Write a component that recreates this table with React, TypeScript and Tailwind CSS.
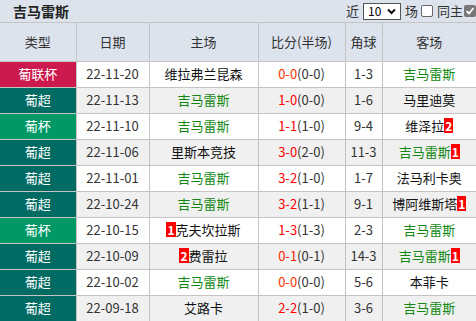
const rows = [
  { t: "葡联杯", tc: "bg-[#cc1a4e]", d: "22-11-20", h: "维拉弗兰昆森", hg: false, hb: "", s: "0-0", sc: "text-[#ff3300]", ht: "(0-0)", c: "1-3", a: "吉马雷斯", ag: true, ab: "" },
  { t: "葡超", tc: "bg-[#006b63]", d: "22-11-13", h: "吉马雷斯", hg: true, hb: "", s: "1-0", sc: "text-[#ff0000]", ht: "(0-0)", c: "1-6", a: "马里迪莫", ag: false, ab: "" },
  { t: "葡杯", tc: "bg-[#009966]", d: "22-11-10", h: "吉马雷斯", hg: true, hb: "", s: "1-1", sc: "text-[#ff0000]", ht: "(1-0)", c: "9-4", a: "维泽拉", ag: false, ab: "2" },
  { t: "葡超", tc: "bg-[#006b63]", d: "22-11-06", h: "里斯本竞技", hg: false, hb: "", s: "3-0", sc: "text-[#ff0000]", ht: "(2-0)", c: "11-3", a: "吉马雷斯", ag: true, ab: "1" },
  { t: "葡超", tc: "bg-[#006b63]", d: "22-11-01", h: "吉马雷斯", hg: true, hb: "", s: "3-2", sc: "text-[#ff0000]", ht: "(1-0)", c: "1-7", a: "法马利卡奥", ag: false, ab: "" },
  { t: "葡超", tc: "bg-[#006b63]", d: "22-10-24", h: "吉马雷斯", hg: true, hb: "", s: "3-2", sc: "text-[#ff0000]", ht: "(1-1)", c: "9-1", a: "博阿维斯塔", ag: false, ab: "1" },
  { t: "葡杯", tc: "bg-[#009966]", d: "22-10-15", h: "克夫坎拉斯", hg: false, hb: "1", s: "1-3", sc: "text-[#ff0000]", ht: "(1-3)", c: "2-3", a: "吉马雷斯", ag: true, ab: "" },
  { t: "葡超", tc: "bg-[#006b63]", d: "22-10-09", h: "费雷拉", hg: false, hb: "2", s: "0-1", sc: "text-[#ff2200]", ht: "(0-1)", c: "14-3", a: "吉马雷斯", ag: true, ab: "1" },
  { t: "葡超", tc: "bg-[#006b63]", d: "22-10-02", h: "吉马雷斯", hg: true, hb: "", s: "0-0", sc: "text-[#ff3300]", ht: "(0-0)", c: "5-6", a: "本菲卡", ag: false, ab: "" },
  { t: "葡超", tc: "bg-[#006b63]", d: "22-09-18", h: "艾路卡", hg: false, hb: "", s: "2-2", sc: "text-[#ff0000]", ht: "(1-0)", c: "3-6", a: "吉马雷斯", ag: true, ab: "" },
]

const Badge = ({ n }: { n: string }) => (
  <span className="inline-block bg-[#ff0000] text-white font-bold text-[12px] leading-[15px] px-[1px]">{n}</span>
)

const cell = "border-r border-b border-[#c4c4c4] h-[26px] text-center align-middle"

export default function App() {
  return (
    <div className="w-[476px] h-[321px] overflow-hidden bg-white text-[13px] text-[#333] font-['Noto_Sans_CJK_SC','Noto_Sans',sans-serif]">
      <div className="h-[23px] bg-[#dce3ed] flex items-center justify-between border-b border-[#c4c4c4]">
        <div className="pl-[13px] font-bold text-[14px] text-[#222]">吉马雷斯</div>
        <div className="flex items-center text-[13px] text-[#333]">
          <span>近</span>
          <span className="ml-[4px] w-[38px] h-[17px] border border-[#555] bg-white flex items-center justify-between px-[4px] text-[12px] text-black">
            10
            <svg width="9" height="7" viewBox="0 0 9 7"><path d="M1 1.5 4.5 5 8 1.5" stroke="#111" strokeWidth="2" fill="none" /></svg>
          </span>
          <span className="ml-[4px]">场</span>
          <span className="ml-[3px] w-[12px] h-[12px] border border-[#666] rounded-[2px] bg-white"></span>
          <span className="ml-[4px]">同主</span>
          <span className="ml-[1px] w-[12px] h-[12px] rounded-[2px] bg-[#777] flex items-center justify-center">
            <svg width="10" height="10" viewBox="0 0 10 10"><path d="M1.5 5.2 4 7.5 8.5 2" stroke="#fff" strokeWidth="1.8" fill="none" /></svg>
          </span>
        </div>
      </div>
      <table className="w-[476px] border-collapse table-fixed">
        <colgroup>
          <col className="w-[76px]" />
          <col className="w-[73px]" />
          <col className="w-[109px]" />
          <col className="w-[87px]" />
          <col className="w-[37px]" />
          <col className="w-[94px]" />
        </colgroup>
        <thead>
          <tr className="bg-[#dce3ed] text-[#333]">
            {["类型", "日期", "主场", "比分(半场)", "角球", "客场"].map((x, i) => (
              <th key={i} className={`h-[38px] font-normal border-b border-[#c4c4c4] text-center ${i < 5 ? "border-r" : ""}`}>{x}</th>
            ))}
          </tr>
        </thead>
        <tbody>
          {rows.map((r, i) => (
            <tr key={i} className={i % 2 ? "bg-[#f0f0f0]" : "bg-white"}>
              <td className={`${cell} ${r.tc} text-white`}>{r.t}</td>
              <td className={cell}>{r.d}</td>
              <td className={`${cell} ${r.hg ? "text-[#118811]" : "text-[#111]"}`}>
                {r.hb && <Badge n={r.hb} />}
                {r.h}
              </td>
              <td className={cell}>
                <span className={r.sc}>{r.s}</span>
                <span>{r.ht}</span>
              </td>
              <td className={cell}>{r.c}</td>
              <td className={`${cell} border-r-0 ${r.ag ? "text-[#118811]" : "text-[#111]"}`}>
                {r.a}
                {r.ab && <Badge n={r.ab} />}
              </td>
            </tr>
          ))}
        </tbody>
      </table>
    </div>
  )
}
